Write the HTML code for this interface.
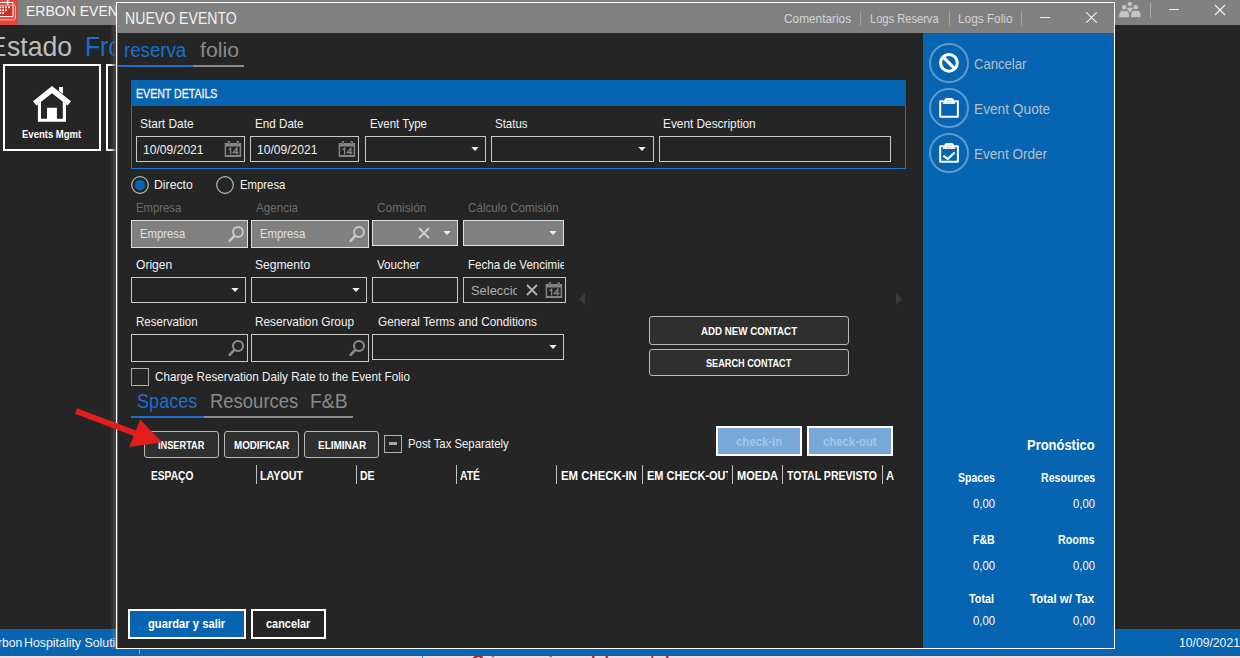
<!DOCTYPE html><html><head><meta charset="utf-8"><style>
html,body{margin:0;padding:0;width:1240px;height:658px;overflow:hidden;position:relative}
.r{position:absolute}
.t{position:absolute;white-space:nowrap;font-family:"Liberation Sans",sans-serif}
 body{background:#252525}
</style></head><body>
<div class="r" style="left:0px;top:0px;width:1240px;height:25px;background:#808080"></div>
<div class="r" style="left:0px;top:0px;width:18px;height:25px;background:#e3463b"></div>
<svg class="r" style="left:0;top:0" width="18" height="25" viewBox="0 0 18 25">
<rect x="-6" y="2.6" width="19" height="14" fill="#c9302a"/>
<path d="M-6 5.2 H13.6 A1.6 1.6 0 0 1 15.4 7 V18 A1.8 1.8 0 0 1 13.6 19.8 H-6" fill="none" stroke="#f6c0b8" stroke-width="1"/>
<path d="M-6 2.6 H13 V16.6 H-6" fill="none" stroke="#fff" stroke-width="1"/>
<path d="M7.7 0 V4.5" stroke="#fff" stroke-width="1.6"/>
<g fill="#fff"><rect x="-0.5" y="6.4" width="1.8" height="1.8"/><rect x="2.2" y="6.4" width="1.8" height="1.8"/><rect x="5" y="6.4" width="1.8" height="1.8"/><rect x="8.2" y="6.4" width="1.8" height="1.8"/>
<rect x="-0.5" y="9.4" width="1.8" height="1.8"/><rect x="2.2" y="9.4" width="1.8" height="1.8"/><rect x="5" y="9.4" width="1.8" height="1.8"/>
<rect x="-0.5" y="12.2" width="1.8" height="1.8"/><rect x="2.2" y="12.2" width="1.8" height="1.8"/></g>
</svg>
<div class="t" style="left:25.70px;top:3px;font-size:15.5px;line-height:15.5px;color:#f4f4f4;transform:scaleX(0.9038);transform-origin:0 0;">ERBON EVENTOS</div>
<svg class="r" style="left:1117px;top:0px" width="26" height="20" viewBox="0 0 26 20">
<g fill="#c4c4c4" stroke="#808080" stroke-width="0.8">
<circle cx="12.9" cy="4" r="2.6"/><path d="M9.3 7.2 H16.5 Q17 7.2 16.8 8 L13.2 13.6 L9.2 8 Q9 7.2 9.3 7.2Z"/>
<circle cx="7.2" cy="7.3" r="2.7"/><path d="M1.8 17.8 Q1.8 11 4.5 10.6 H9.9 Q12.6 11 12.6 17.8Z"/>
<circle cx="18.7" cy="7.2" r="2.7"/><path d="M13.6 17.5 Q13.6 10.8 16.3 10.4 H21.3 Q24 10.8 24 17.5Z"/>
</g></svg>
<div class="r" style="left:1150px;top:3px;width:1px;height:15px;background:#a8a8a8"></div>
<div class="r" style="left:1169px;top:9px;width:10px;height:1px;background:#f0f0f0"></div>
<svg class="r" style="left:1214px;top:4px" width="12" height="12" viewBox="0 0 12 12"><path d="M1 1 L11 11 M11 1 L1 11" stroke="#f4f4f4" stroke-width="1.1"/></svg>
<div class="t" style="left:7.23px;top:33px;font-size:27.5px;line-height:27.5px;color:#bcbcbc;transform:scaleX(0.9682);transform-origin:0 0;">stado</div>
<div class="t" style="left:-10.80px;top:33px;font-size:27.5px;line-height:27.5px;color:#bcbcbc;transform:scaleX(0.9500);transform-origin:0 0;">E</div>
<div class="t" style="left:84.80px;top:33px;font-size:27.5px;line-height:27.5px;color:#1a6fcf;transform:scaleX(0.9000);transform-origin:0 0;">Front</div>
<div class="r" style="left:3px;top:64px;width:98px;height:87px;border:2px solid #fff;box-sizing:border-box"></div>
<div class="r" style="left:106px;top:64px;width:98px;height:87px;border:2px solid #fff;box-sizing:border-box"></div>
<svg class="r" style="left:25px;top:80px" width="55" height="50" viewBox="0 0 55 50">
<path d="M27 5.9 L8 21.3 L11.4 25.5 L27 13.3 L42.6 25.5 L46 21.3Z" fill="#fff"/>
<path d="M34 7 H38 V14 L34 11Z" fill="#fff"/>
<path d="M12.9 20 L16 17.5 V38.8 H22 V27.7 H31.9 V38.8 H37.8 V17.5 L41 20 V41.8 H12.9Z" fill="#fff"/>
</svg>
<div class="t" style="left:22.30px;top:130px;font-size:10px;line-height:10px;color:#fff;font-weight:bold;transform:scaleX(0.9508);transform-origin:0 0;">Events Mgmt</div>
<div class="r" style="left:0px;top:629px;width:1240px;height:26px;background:#0664b0"></div>
<div class="t" style="left:24.25px;top:636px;font-size:13px;line-height:13px;color:#f4f4f4;transform:scaleX(0.9508);transform-origin:0 0;">Hospitality Solutions</div>
<div class="t" style="left:-9.72px;top:636px;font-size:13px;line-height:13px;color:#f4f4f4;transform:scaleX(0.9300);transform-origin:0 0;">Erbon</div>
<div class="r" style="left:139px;top:649px;width:1px;height:5px;background:#9ab"></div>
<div class="t" style="left:1178.63px;top:637px;font-size:12.5px;line-height:12.5px;color:#f4f4f4;transform:scaleX(0.9738);transform-origin:0 0;">10/09/2021</div>
<div class="r" style="left:0px;top:655px;width:1240px;height:1px;background:#e81010"></div>
<div class="r" style="left:0px;top:656px;width:1240px;height:2px;background:#ffd6d6"></div>
<div class="r" style="left:0;top:656px;width:1240px;height:2px;overflow:hidden"><div class="t" style="left:472px;top:-2px;font-size:16px;line-height:16px;color:#b02020;font-weight:bold">Origem origen del evento)</div></div>
<div class="r" style="left:422px;top:656px;width:1px;height:2px;background:#2a8a9a"></div>
<div class="r" style="left:110px;top:2px;width:6px;height:23px;background:linear-gradient(to right,rgba(255,255,255,0),rgba(255,255,255,0.07))"></div>
<div class="r" style="left:110px;top:25px;width:6px;height:604px;background:linear-gradient(to right,rgba(70,70,70,0),rgba(75,75,75,0.9))"></div>
<div class="r" style="left:110px;top:629px;width:6px;height:20px;background:linear-gradient(to right,rgba(140,160,190,0),rgba(140,160,190,0.35))"></div>
<div class="r" style="left:116px;top:2px;width:999px;height:647px;border:1px solid #fff;box-sizing:border-box;background:#252525"></div>
<div class="r" style="left:117px;top:3px;width:997px;height:30px;background:#808080"></div>
<div class="r" style="left:117px;top:33px;width:1px;height:615px;background:#1a74d0"></div>
<div class="t" style="left:124.92px;top:11px;font-size:16px;line-height:16px;color:#f2f2f2;transform:scaleX(0.8817);transform-origin:0 0;">NUEVO EVENTO</div>
<div class="t" style="left:784.40px;top:12px;font-size:13px;line-height:13px;color:#d4d4d4;transform:scaleX(0.9108);transform-origin:0 0;">Comentarios</div>
<div class="r" style="left:860px;top:11px;width:1px;height:15px;background:#a0a0a0"></div>
<div class="t" style="left:869.94px;top:12px;font-size:13px;line-height:13px;color:#d4d4d4;transform:scaleX(0.8550);transform-origin:0 0;">Logs Reserva</div>
<div class="r" style="left:949px;top:11px;width:1px;height:15px;background:#a0a0a0"></div>
<div class="t" style="left:957.59px;top:12px;font-size:13px;line-height:13px;color:#d4d4d4;transform:scaleX(0.9085);transform-origin:0 0;">Logs Folio</div>
<div class="r" style="left:1021px;top:11px;width:1px;height:15px;background:#a0a0a0"></div>
<div class="r" style="left:1040px;top:17px;width:10px;height:1.2px;background:#f0f0f0"></div>
<svg class="r" style="left:1085.5px;top:12.4px" width="12" height="12" viewBox="0 0 12 12"><path d="M0.6 0.6 L10.4 10.4 M10.4 0.6 L0.6 10.4" stroke="#f4f4f4" stroke-width="1.1" stroke-linecap="round"/></svg>
<div class="r" style="left:923px;top:33px;width:191px;height:615px;background:#0664b0"></div>
<svg class="r" style="left:927px;top:41px" width="44" height="44" viewBox="0 0 44 44"><circle cx="22" cy="22" r="19" fill="none" stroke="rgba(255,255,255,0.35)" stroke-width="2"/></svg>
<svg class="r" style="left:927px;top:86px" width="44" height="44" viewBox="0 0 44 44"><circle cx="22" cy="22" r="19" fill="none" stroke="rgba(255,255,255,0.35)" stroke-width="2"/></svg>
<svg class="r" style="left:927px;top:131px" width="44" height="44" viewBox="0 0 44 44"><circle cx="22" cy="22" r="19" fill="none" stroke="rgba(255,255,255,0.35)" stroke-width="2"/></svg>
<div class="t" style="left:974.40px;top:57px;font-size:14px;line-height:14px;color:#b9c0c8;transform:scaleX(0.9339);transform-origin:0 0;">Cancelar</div>
<div class="t" style="left:973.52px;top:102px;font-size:14px;line-height:14px;color:#b9c0c8;transform:scaleX(0.9792);transform-origin:0 0;">Event Quote</div>
<div class="t" style="left:973.53px;top:147px;font-size:14px;line-height:14px;color:#b9c0c8;transform:scaleX(0.9680);transform-origin:0 0;">Event Order</div>
<svg class="r" style="left:934px;top:48px" width="30" height="30" viewBox="0 0 30 30"><circle cx="14.95" cy="14.85" r="8.4" fill="none" stroke="#fff" stroke-width="3"/><path d="M9 8.9 L20.9 20.8" stroke="#fff" stroke-width="3.1"/></svg>
<svg class="r" style="left:934px;top:92px" width="30" height="30" viewBox="0 0 30 30"><path d="M6.2 9.2 H23.9 V24.8 H6.2Z" fill="none" stroke="#fff" stroke-width="2" stroke-linejoin="round"/><path d="M8.9 10.3 H21.2 V11.9 H8.9Z" fill="#fff"/><path d="M10.3 11.5 V8.5 Q10.3 5.9 13 5.9 H17.3 Q20 5.9 20 8.5 V11.5 H18 V9.2 Q18 8 16.8 8 H13.5 Q12.3 8 12.3 9.2 V11.5Z" fill="#fff"/></svg>
<svg class="r" style="left:934px;top:137px" width="30" height="30" viewBox="0 0 30 30"><path d="M6.2 9.2 H23.9 V24.8 H6.2Z" fill="none" stroke="#fff" stroke-width="2" stroke-linejoin="round"/><path d="M8.9 10.3 H21.2 V11.9 H8.9Z" fill="#fff"/><path d="M10.3 11.5 V8.5 Q10.3 5.9 13 5.9 H17.3 Q20 5.9 20 8.5 V11.5 H18 V9.2 Q18 8 16.8 8 H13.5 Q12.3 8 12.3 9.2 V11.5Z" fill="#fff"/><path d="M9.4 18.6 L13.7 22 L20.6 15.5" fill="none" stroke="#fff" stroke-width="2.2"/></svg>
<div class="t" style="left:123.67px;top:40px;font-size:20px;line-height:20px;color:#1a6fcf;transform:scaleX(0.9318);transform-origin:0 0;">reserva</div>
<div class="t" style="left:199.70px;top:40px;font-size:20px;line-height:20px;color:#8a8a8a;transform:scaleX(1.0639);transform-origin:0 0;">folio</div>
<div class="r" style="left:117px;top:65px;width:76px;height:2px;background:#1a6fcf"></div>
<div class="r" style="left:193px;top:65px;width:51px;height:2px;background:#8c8c8c"></div>
<div class="r" style="left:131px;top:80px;width:775px;height:89px;border:1px solid #1577d0;box-sizing:border-box"></div>
<div class="r" style="left:131px;top:80px;width:775px;height:26px;background:#0664b0"></div>
<div class="t" style="left:135.65px;top:88px;font-size:12.5px;line-height:12.5px;color:#f4f4f4;transform:scaleX(0.8474);transform-origin:0 0;-webkit-text-stroke:0.3px #f4f4f4;">EVENT DETAILS</div>
<div class="t" style="left:140.18px;top:117px;font-size:13px;line-height:13px;color:#f2f2f2;transform:scaleX(0.9175);transform-origin:0 0;">Start Date</div>
<div class="t" style="left:254.70px;top:117px;font-size:13px;line-height:13px;color:#f2f2f2;transform:scaleX(0.8962);transform-origin:0 0;">End Date</div>
<div class="t" style="left:369.72px;top:117px;font-size:13px;line-height:13px;color:#f2f2f2;transform:scaleX(0.8781);transform-origin:0 0;">Event Type</div>
<div class="t" style="left:495.22px;top:117px;font-size:13px;line-height:13px;color:#f2f2f2;transform:scaleX(0.8833);transform-origin:0 0;">Status</div>
<div class="t" style="left:663.49px;top:117px;font-size:13px;line-height:13px;color:#f2f2f2;transform:scaleX(0.9099);transform-origin:0 0;">Event Description</div>
<div class="r" style="left:136px;top:136px;width:109px;height:26px;border:1px solid #c8c8c8;box-sizing:border-box;background:transparent"></div>
<div class="r" style="left:250px;top:136px;width:109px;height:26px;border:1px solid #c8c8c8;box-sizing:border-box;background:transparent"></div>
<div class="r" style="left:365px;top:136px;width:121px;height:26px;border:1px solid #c8c8c8;box-sizing:border-box;background:transparent"></div>
<div class="r" style="left:491px;top:136px;width:163px;height:26px;border:1px solid #c8c8c8;box-sizing:border-box;background:transparent"></div>
<div class="r" style="left:659px;top:136px;width:232px;height:26px;border:1px solid #c8c8c8;box-sizing:border-box;background:transparent"></div>
<div class="t" style="left:142.97px;top:143px;font-size:13px;line-height:13px;color:#f2f2f2;transform:scaleX(0.9312);transform-origin:0 0;">10/09/2021</div>
<div class="t" style="left:256.97px;top:143px;font-size:13px;line-height:13px;color:#f2f2f2;transform:scaleX(0.9281);transform-origin:0 0;">10/09/2021</div>
<svg class="r" style="left:224px;top:140px" width="18" height="18" viewBox="0 0 18 18"><rect x="0.7" y="3" width="16.4" height="14" fill="#858585"/><rect x="2.1" y="6.5" width="13.6" height="8.5" fill="#252525"/><rect x="3.7" y="0.9" width="2.4" height="3.4" rx="1" fill="#858585"/><rect x="12.6" y="0.9" width="2.4" height="3.4" rx="1" fill="#858585"/><circle cx="4.9" cy="3.1" r="0.6" fill="#252525"/><circle cx="13.8" cy="3.1" r="0.6" fill="#252525"/><path d="M4.7 9.8 L6.6 8.2 V14.6 M12.8 14.6 V8.2 L9.3 12.5 H14.4" fill="none" stroke="#858585" stroke-width="1.3"/></svg>
<svg class="r" style="left:338px;top:140px" width="18" height="18" viewBox="0 0 18 18"><rect x="0.7" y="3" width="16.4" height="14" fill="#858585"/><rect x="2.1" y="6.5" width="13.6" height="8.5" fill="#252525"/><rect x="3.7" y="0.9" width="2.4" height="3.4" rx="1" fill="#858585"/><rect x="12.6" y="0.9" width="2.4" height="3.4" rx="1" fill="#858585"/><circle cx="4.9" cy="3.1" r="0.6" fill="#252525"/><circle cx="13.8" cy="3.1" r="0.6" fill="#252525"/><path d="M4.7 9.8 L6.6 8.2 V14.6 M12.8 14.6 V8.2 L9.3 12.5 H14.4" fill="none" stroke="#858585" stroke-width="1.3"/></svg>
<svg class="r" style="left:469.8px;top:146.0px" width="10" height="6" viewBox="0 0 10 6"><path d="M1.3 0.9 H8.7 L5 5.1Z" fill="#f0f0f0"/></svg>
<svg class="r" style="left:637.4px;top:146.0px" width="10" height="6" viewBox="0 0 10 6"><path d="M1.3 0.9 H8.7 L5 5.1Z" fill="#f0f0f0"/></svg>
<svg class="r" style="left:131px;top:176px" width="18" height="18" viewBox="0 0 18 18"><circle cx="9" cy="9" r="8.3" fill="none" stroke="#b8b8b8" stroke-width="1.2"/><circle cx="9" cy="9" r="5.2" fill="#0a64b8"/></svg>
<svg class="r" style="left:216px;top:176px" width="18" height="18" viewBox="0 0 18 18"><circle cx="9" cy="9" r="8.3" fill="none" stroke="#b8b8b8" stroke-width="1.2"/></svg>
<div class="t" style="left:154.46px;top:178px;font-size:13px;line-height:13px;color:#f2f2f2;transform:scaleX(0.9425);transform-origin:0 0;">Directo</div>
<div class="t" style="left:239.53px;top:178px;font-size:13px;line-height:13px;color:#f2f2f2;transform:scaleX(0.8725);transform-origin:0 0;">Empresa</div>
<div class="t" style="left:135.73px;top:201px;font-size:13px;line-height:13px;color:#6c6c6c;transform:scaleX(0.8706);transform-origin:0 0;">Empresa</div>
<div class="t" style="left:256.40px;top:201px;font-size:13px;line-height:13px;color:#6c6c6c;transform:scaleX(0.8936);transform-origin:0 0;">Agencia</div>
<div class="t" style="left:377.30px;top:201px;font-size:13px;line-height:13px;color:#6c6c6c;transform:scaleX(0.9111);transform-origin:0 0;">Comisión</div>
<div class="t" style="left:468.40px;top:201px;font-size:13px;line-height:13px;color:#6c6c6c;transform:scaleX(0.8970);transform-origin:0 0;">Cálculo Comisión</div>
<div class="r" style="left:131px;top:220px;width:117px;height:28px;border:1px solid #e0e0e0;box-sizing:border-box;background:#808080"></div>
<div class="r" style="left:251px;top:220px;width:118px;height:28px;border:1px solid #e0e0e0;box-sizing:border-box;background:#808080"></div>
<div class="r" style="left:372px;top:220px;width:86px;height:26px;border:1px solid #e0e0e0;box-sizing:border-box;background:#808080"></div>
<div class="r" style="left:463px;top:220px;width:101px;height:26px;border:1px solid #e0e0e0;box-sizing:border-box;background:#808080"></div>
<div class="t" style="left:139.63px;top:227px;font-size:13px;line-height:13px;color:#e0e0e0;transform:scaleX(0.8686);transform-origin:0 0;">Empresa</div>
<div class="t" style="left:259.73px;top:227px;font-size:13px;line-height:13px;color:#e0e0e0;transform:scaleX(0.8706);transform-origin:0 0;">Empresa</div>
<svg class="r" style="left:224.1px;top:221.8px" width="24" height="24" viewBox="0 0 24 24"><circle cx="14" cy="10" r="5" fill="none" stroke="#c8c8c8" stroke-width="2"/><path d="M10.3 13.9 L5.6 18.8" stroke="#c8c8c8" stroke-width="2.6" stroke-linecap="round"/></svg>
<svg class="r" style="left:345.1px;top:221.8px" width="24" height="24" viewBox="0 0 24 24"><circle cx="14" cy="10" r="5" fill="none" stroke="#c8c8c8" stroke-width="2"/><path d="M10.3 13.9 L5.6 18.8" stroke="#c8c8c8" stroke-width="2.6" stroke-linecap="round"/></svg>
<svg class="r" style="left:418.0px;top:226.5px" width="12" height="12" viewBox="0 0 12 12"><path d="M1 1 L11 11 M11 1 L1 11" stroke="#d0d0d0" stroke-width="1.8"/></svg>
<svg class="r" style="left:441.9px;top:230.0px" width="10" height="6" viewBox="0 0 10 6"><path d="M1.3 0.9 H8.7 L5 5.1Z" fill="#f0f0f0"/></svg>
<svg class="r" style="left:547.7px;top:230.0px" width="10" height="6" viewBox="0 0 10 6"><path d="M1.3 0.9 H8.7 L5 5.1Z" fill="#f0f0f0"/></svg>
<div class="t" style="left:136.10px;top:258px;font-size:13px;line-height:13px;color:#f2f2f2;transform:scaleX(0.9282);transform-origin:0 0;">Origen</div>
<div class="t" style="left:254.87px;top:258px;font-size:13px;line-height:13px;color:#f2f2f2;transform:scaleX(0.9310);transform-origin:0 0;">Segmento</div>
<div class="t" style="left:377.30px;top:258px;font-size:13px;line-height:13px;color:#f2f2f2;transform:scaleX(0.8958);transform-origin:0 0;">Voucher</div>
<div class="r" style="left:0;top:0;width:563.5px;height:658px;overflow:hidden"><div class="t" style="left:467.81px;top:258px;font-size:13px;line-height:13px;color:#f2f2f2;transform:scaleX(0.8881);transform-origin:0 0;">Fecha de Vencimiento</div></div>
<div class="r" style="left:131px;top:277px;width:115px;height:26px;border:1px solid #c8c8c8;box-sizing:border-box;background:transparent"></div>
<div class="r" style="left:251px;top:277px;width:116px;height:26px;border:1px solid #c8c8c8;box-sizing:border-box;background:transparent"></div>
<div class="r" style="left:372px;top:277px;width:86px;height:26px;border:1px solid #c8c8c8;box-sizing:border-box;background:transparent"></div>
<div class="r" style="left:463px;top:277px;width:103px;height:26px;border:1px solid #c8c8c8;box-sizing:border-box;background:transparent"></div>
<svg class="r" style="left:229.9px;top:287.0px" width="10" height="6" viewBox="0 0 10 6"><path d="M1.3 0.9 H8.7 L5 5.1Z" fill="#f0f0f0"/></svg>
<svg class="r" style="left:350.9px;top:287.0px" width="10" height="6" viewBox="0 0 10 6"><path d="M1.3 0.9 H8.7 L5 5.1Z" fill="#f0f0f0"/></svg>
<div class="r" style="left:0;top:0;width:517px;height:658px;overflow:hidden"><div class="t" style="left:471.41px;top:284px;font-size:13px;line-height:13px;color:#b0b0b0;transform:scaleX(0.9917);transform-origin:0 0;">Seleccionar</div></div>
<svg class="r" style="left:526.0px;top:283.7px" width="12" height="12" viewBox="0 0 12 12"><path d="M1 1 L11 11 M11 1 L1 11" stroke="#b4b4b4" stroke-width="1.8"/></svg>
<svg class="r" style="left:545.1px;top:281.2px" width="18" height="18" viewBox="0 0 18 18"><rect x="0.7" y="3" width="16.4" height="14" fill="#858585"/><rect x="2.1" y="6.5" width="13.6" height="8.5" fill="#252525"/><rect x="3.7" y="0.9" width="2.4" height="3.4" rx="1" fill="#858585"/><rect x="12.6" y="0.9" width="2.4" height="3.4" rx="1" fill="#858585"/><circle cx="4.9" cy="3.1" r="0.6" fill="#252525"/><circle cx="13.8" cy="3.1" r="0.6" fill="#252525"/><path d="M4.7 9.8 L6.6 8.2 V14.6 M12.8 14.6 V8.2 L9.3 12.5 H14.4" fill="none" stroke="#858585" stroke-width="1.3"/></svg>
<svg class="r" style="left:578px;top:292px" width="8" height="14" viewBox="0 0 8 14"><path d="M7 1 L1 7 L7 13Z" fill="#3c3c3c"/></svg>
<svg class="r" style="left:895px;top:292px" width="8" height="14" viewBox="0 0 8 14"><path d="M1 1 L7 7 L1 13Z" fill="#3c3c3c"/></svg>
<div class="t" style="left:135.61px;top:315px;font-size:13px;line-height:13px;color:#f2f2f2;transform:scaleX(0.8882);transform-origin:0 0;">Reservation</div>
<div class="t" style="left:255.09px;top:315px;font-size:13px;line-height:13px;color:#f2f2f2;transform:scaleX(0.9074);transform-origin:0 0;">Reservation Group</div>
<div class="t" style="left:377.50px;top:315px;font-size:13px;line-height:13px;color:#f2f2f2;transform:scaleX(0.9057);transform-origin:0 0;">General Terms and Conditions</div>
<div class="r" style="left:131px;top:334px;width:117px;height:28px;border:1px solid #c8c8c8;box-sizing:border-box;background:transparent"></div>
<div class="r" style="left:251px;top:334px;width:118px;height:28px;border:1px solid #c8c8c8;box-sizing:border-box;background:transparent"></div>
<div class="r" style="left:372px;top:334px;width:192px;height:26px;border:1px solid #c8c8c8;box-sizing:border-box;background:transparent"></div>
<svg class="r" style="left:224.1px;top:335.8px" width="24" height="24" viewBox="0 0 24 24"><circle cx="14" cy="10" r="5" fill="none" stroke="#8c8c8c" stroke-width="2"/><path d="M10.3 13.9 L5.6 18.8" stroke="#8c8c8c" stroke-width="2.6" stroke-linecap="round"/></svg>
<svg class="r" style="left:345.1px;top:335.8px" width="24" height="24" viewBox="0 0 24 24"><circle cx="14" cy="10" r="5" fill="none" stroke="#8c8c8c" stroke-width="2"/><path d="M10.3 13.9 L5.6 18.8" stroke="#8c8c8c" stroke-width="2.6" stroke-linecap="round"/></svg>
<svg class="r" style="left:547.7px;top:343.8px" width="10" height="6" viewBox="0 0 10 6"><path d="M1.3 0.9 H8.7 L5 5.1Z" fill="#f0f0f0"/></svg>
<div class="r" style="left:649px;top:316px;width:200px;height:29px;border:1.5px solid #b8b8b8;border-radius:3px;box-sizing:border-box;background:#2f2f2f"></div>
<div class="r" style="left:649px;top:349px;width:200px;height:27px;border:1.5px solid #b8b8b8;border-radius:3px;box-sizing:border-box;background:#2f2f2f"></div>
<div class="t" style="left:700.60px;top:327px;font-size:10px;line-height:10px;color:#fff;font-weight:bold;transform:scaleX(0.9737);transform-origin:0 0;">ADD NEW CONTACT</div>
<div class="t" style="left:706.00px;top:359px;font-size:10px;line-height:10px;color:#fff;font-weight:bold;transform:scaleX(0.9160);transform-origin:0 0;">SEARCH CONTACT</div>
<div class="r" style="left:131px;top:368px;width:18px;height:18px;border:1px solid #b0b0b0;box-sizing:border-box"></div>
<div class="t" style="left:154.80px;top:370px;font-size:13px;line-height:13px;color:#f2f2f2;transform:scaleX(0.8975);transform-origin:0 0;">Charge Reservation Daily Rate to the Event Folio</div>
<div class="t" style="left:136.50px;top:391px;font-size:20px;line-height:20px;color:#1a6fcf;transform:scaleX(0.9045);transform-origin:0 0;">Spaces</div>
<div class="t" style="left:210.18px;top:391px;font-size:20px;line-height:20px;color:#8a8a8a;transform:scaleX(0.9234);transform-origin:0 0;">Resources</div>
<div class="t" style="left:309.93px;top:391px;font-size:20px;line-height:20px;color:#8a8a8a;transform:scaleX(0.9676);transform-origin:0 0;">F&amp;B</div>
<div class="r" style="left:131px;top:416px;width:73px;height:2px;background:#1a6fcf"></div>
<div class="r" style="left:204px;top:416px;width:149px;height:2px;background:#8c8c8c"></div>
<div class="r" style="left:144px;top:431px;width:75px;height:27px;border:1.5px solid #b8b8b8;border-radius:3px;box-sizing:border-box;background:#2f2f2f"></div>
<div class="t" style="left:158.30px;top:441px;font-size:10px;line-height:10px;color:#fff;font-weight:bold;transform:scaleX(0.9216);transform-origin:0 0;">INSERTAR</div>
<div class="r" style="left:224px;top:431px;width:75px;height:27px;border:1.5px solid #b8b8b8;border-radius:3px;box-sizing:border-box;background:#2f2f2f"></div>
<div class="t" style="left:233.80px;top:441px;font-size:10px;line-height:10px;color:#fff;font-weight:bold;transform:scaleX(0.9772);transform-origin:0 0;">MODIFICAR</div>
<div class="r" style="left:304px;top:431px;width:75px;height:27px;border:1.5px solid #b8b8b8;border-radius:3px;box-sizing:border-box;background:#2f2f2f"></div>
<div class="t" style="left:317.90px;top:441px;font-size:10px;line-height:10px;color:#fff;font-weight:bold;transform:scaleX(0.9958);transform-origin:0 0;">ELIMINAR</div>
<div class="r" style="left:384px;top:435px;width:18px;height:18px;border:1px solid #b0b0b0;box-sizing:border-box"></div>
<div class="r" style="left:389px;top:442px;width:8px;height:3px;background:#a8a8a8"></div>
<div class="t" style="left:407.63px;top:437px;font-size:13px;line-height:13px;color:#f2f2f2;transform:scaleX(0.8730);transform-origin:0 0;">Post Tax Separately</div>
<div class="r" style="left:716px;top:426px;width:86px;height:30px;border:2px solid #fff;box-sizing:border-box;background:#78a8d8"></div>
<div class="t" style="left:736.40px;top:436px;font-size:12px;line-height:12px;color:#a4c6ea;font-weight:bold;transform:scaleX(0.9500);transform-origin:0 0;">check-in</div>
<div class="r" style="left:807px;top:426px;width:86px;height:30px;border:2px solid #fff;box-sizing:border-box;background:#78a8d8"></div>
<div class="t" style="left:823.10px;top:436px;font-size:12px;line-height:12px;color:#a4c6ea;font-weight:bold;transform:scaleX(0.9456);transform-origin:0 0;">check-out</div>
<div class="t" style="left:150.60px;top:470px;font-size:12px;line-height:12px;color:#fff;font-weight:bold;transform:scaleX(0.8500);transform-origin:0 0;">ESPAÇO</div>
<div class="t" style="left:260.30px;top:470px;font-size:12px;line-height:12px;color:#fff;font-weight:bold;transform:scaleX(0.8898);transform-origin:0 0;">LAYOUT</div>
<div class="t" style="left:360.30px;top:470px;font-size:12px;line-height:12px;color:#fff;font-weight:bold;transform:scaleX(0.8765);transform-origin:0 0;">DE</div>
<div class="t" style="left:460.30px;top:470px;font-size:12px;line-height:12px;color:#fff;font-weight:bold;transform:scaleX(0.8652);transform-origin:0 0;">ATÉ</div>
<div class="r" style="left:0;top:0;width:638.5px;height:658px;overflow:hidden"><div class="t" style="left:560.50px;top:470px;font-size:12px;line-height:12px;color:#fff;font-weight:bold;transform:scaleX(0.9475);transform-origin:0 0;">EM CHECK-IN SIN</div></div>
<div class="r" style="left:0;top:0;width:727.5px;height:658px;overflow:hidden"><div class="t" style="left:646.50px;top:470px;font-size:12px;line-height:12px;color:#fff;font-weight:bold;transform:scaleX(0.9128);transform-origin:0 0;">EM CHECK-OUT</div></div>
<div class="t" style="left:736.60px;top:470px;font-size:12px;line-height:12px;color:#fff;font-weight:bold;transform:scaleX(0.9200);transform-origin:0 0;">MOEDA</div>
<div class="t" style="left:786.70px;top:470px;font-size:12px;line-height:12px;color:#fff;font-weight:bold;transform:scaleX(0.8777);transform-origin:0 0;">TOTAL PREVISTO</div>
<div class="r" style="left:0;top:0;width:893.5px;height:658px;overflow:hidden"><div class="t" style="left:885.80px;top:470px;font-size:12px;line-height:12px;color:#fff;font-weight:bold;transform:scaleX(0.9300);transform-origin:0 0;">A</div></div>
<div class="r" style="left:256px;top:465px;width:1px;height:19px;background:#c0c0c0"></div>
<div class="r" style="left:356px;top:465px;width:1px;height:19px;background:#c0c0c0"></div>
<div class="r" style="left:456px;top:465px;width:1px;height:19px;background:#c0c0c0"></div>
<div class="r" style="left:556px;top:465px;width:1px;height:19px;background:#c0c0c0"></div>
<div class="r" style="left:642px;top:465px;width:1px;height:19px;background:#c0c0c0"></div>
<div class="r" style="left:732px;top:465px;width:1px;height:19px;background:#c0c0c0"></div>
<div class="r" style="left:782px;top:465px;width:1px;height:19px;background:#c0c0c0"></div>
<div class="r" style="left:882px;top:465px;width:1px;height:19px;background:#c0c0c0"></div>
<div class="t" style="left:1026.71px;top:438px;font-size:14.5px;line-height:14.5px;color:#fff;font-weight:bold;transform:scaleX(0.8933);transform-origin:0 0;">Pronóstico</div>
<div class="t" style="left:957.80px;top:472px;font-size:12px;line-height:12px;color:#fff;font-weight:bold;transform:scaleX(0.8762);transform-origin:0 0;">Spaces</div>
<div class="t" style="left:1040.70px;top:472px;font-size:12px;line-height:12px;color:#fff;font-weight:bold;transform:scaleX(0.8836);transform-origin:0 0;">Resources</div>
<div class="t" style="left:972.90px;top:498px;font-size:12px;line-height:12px;color:#fff;transform:scaleX(0.9435);transform-origin:0 0;">0,00</div>
<div class="t" style="left:1073.00px;top:498px;font-size:12px;line-height:12px;color:#fff;transform:scaleX(0.9391);transform-origin:0 0;">0,00</div>
<div class="t" style="left:972.60px;top:534px;font-size:12px;line-height:12px;color:#fff;font-weight:bold;transform:scaleX(0.8800);transform-origin:0 0;">F&amp;B</div>
<div class="t" style="left:1057.90px;top:534px;font-size:12px;line-height:12px;color:#fff;font-weight:bold;transform:scaleX(0.8951);transform-origin:0 0;">Rooms</div>
<div class="t" style="left:972.90px;top:560px;font-size:12px;line-height:12px;color:#fff;transform:scaleX(0.9435);transform-origin:0 0;">0,00</div>
<div class="t" style="left:1073.00px;top:560px;font-size:12px;line-height:12px;color:#fff;transform:scaleX(0.9391);transform-origin:0 0;">0,00</div>
<div class="t" style="left:969.30px;top:593px;font-size:12px;line-height:12px;color:#fff;font-weight:bold;transform:scaleX(0.9036);transform-origin:0 0;">Total</div>
<div class="t" style="left:1030.30px;top:593px;font-size:12px;line-height:12px;color:#fff;font-weight:bold;transform:scaleX(0.9597);transform-origin:0 0;">Total w/ Tax</div>
<div class="t" style="left:972.90px;top:615px;font-size:12px;line-height:12px;color:#fff;transform:scaleX(0.9435);transform-origin:0 0;">0,00</div>
<div class="t" style="left:1073.00px;top:615px;font-size:12px;line-height:12px;color:#fff;transform:scaleX(0.9391);transform-origin:0 0;">0,00</div>
<div class="r" style="left:128px;top:609px;width:118px;height:30px;border:2px solid #fff;box-sizing:border-box;background:#0664b0"></div>
<div class="t" style="left:148.40px;top:618px;font-size:12px;line-height:12px;color:#fff;font-weight:bold;transform:scaleX(0.9337);transform-origin:0 0;">guardar y salir</div>
<div class="r" style="left:251px;top:609px;width:75px;height:30px;border:2px solid #fff;box-sizing:border-box;background:#252525"></div>
<div class="t" style="left:266.00px;top:618px;font-size:12px;line-height:12px;color:#fff;font-weight:bold;transform:scaleX(0.9102);transform-origin:0 0;">cancelar</div>
<svg class="r" style="left:0;top:0" width="1240" height="658" viewBox="0 0 1240 658"><path d="M76 411 L137 434" stroke="#e31c1c" stroke-width="6"/><path d="M140.2 419.7 L129.2 447.1 L162.1 442.3Z" fill="#e31c1c"/></svg>
</body></html>
